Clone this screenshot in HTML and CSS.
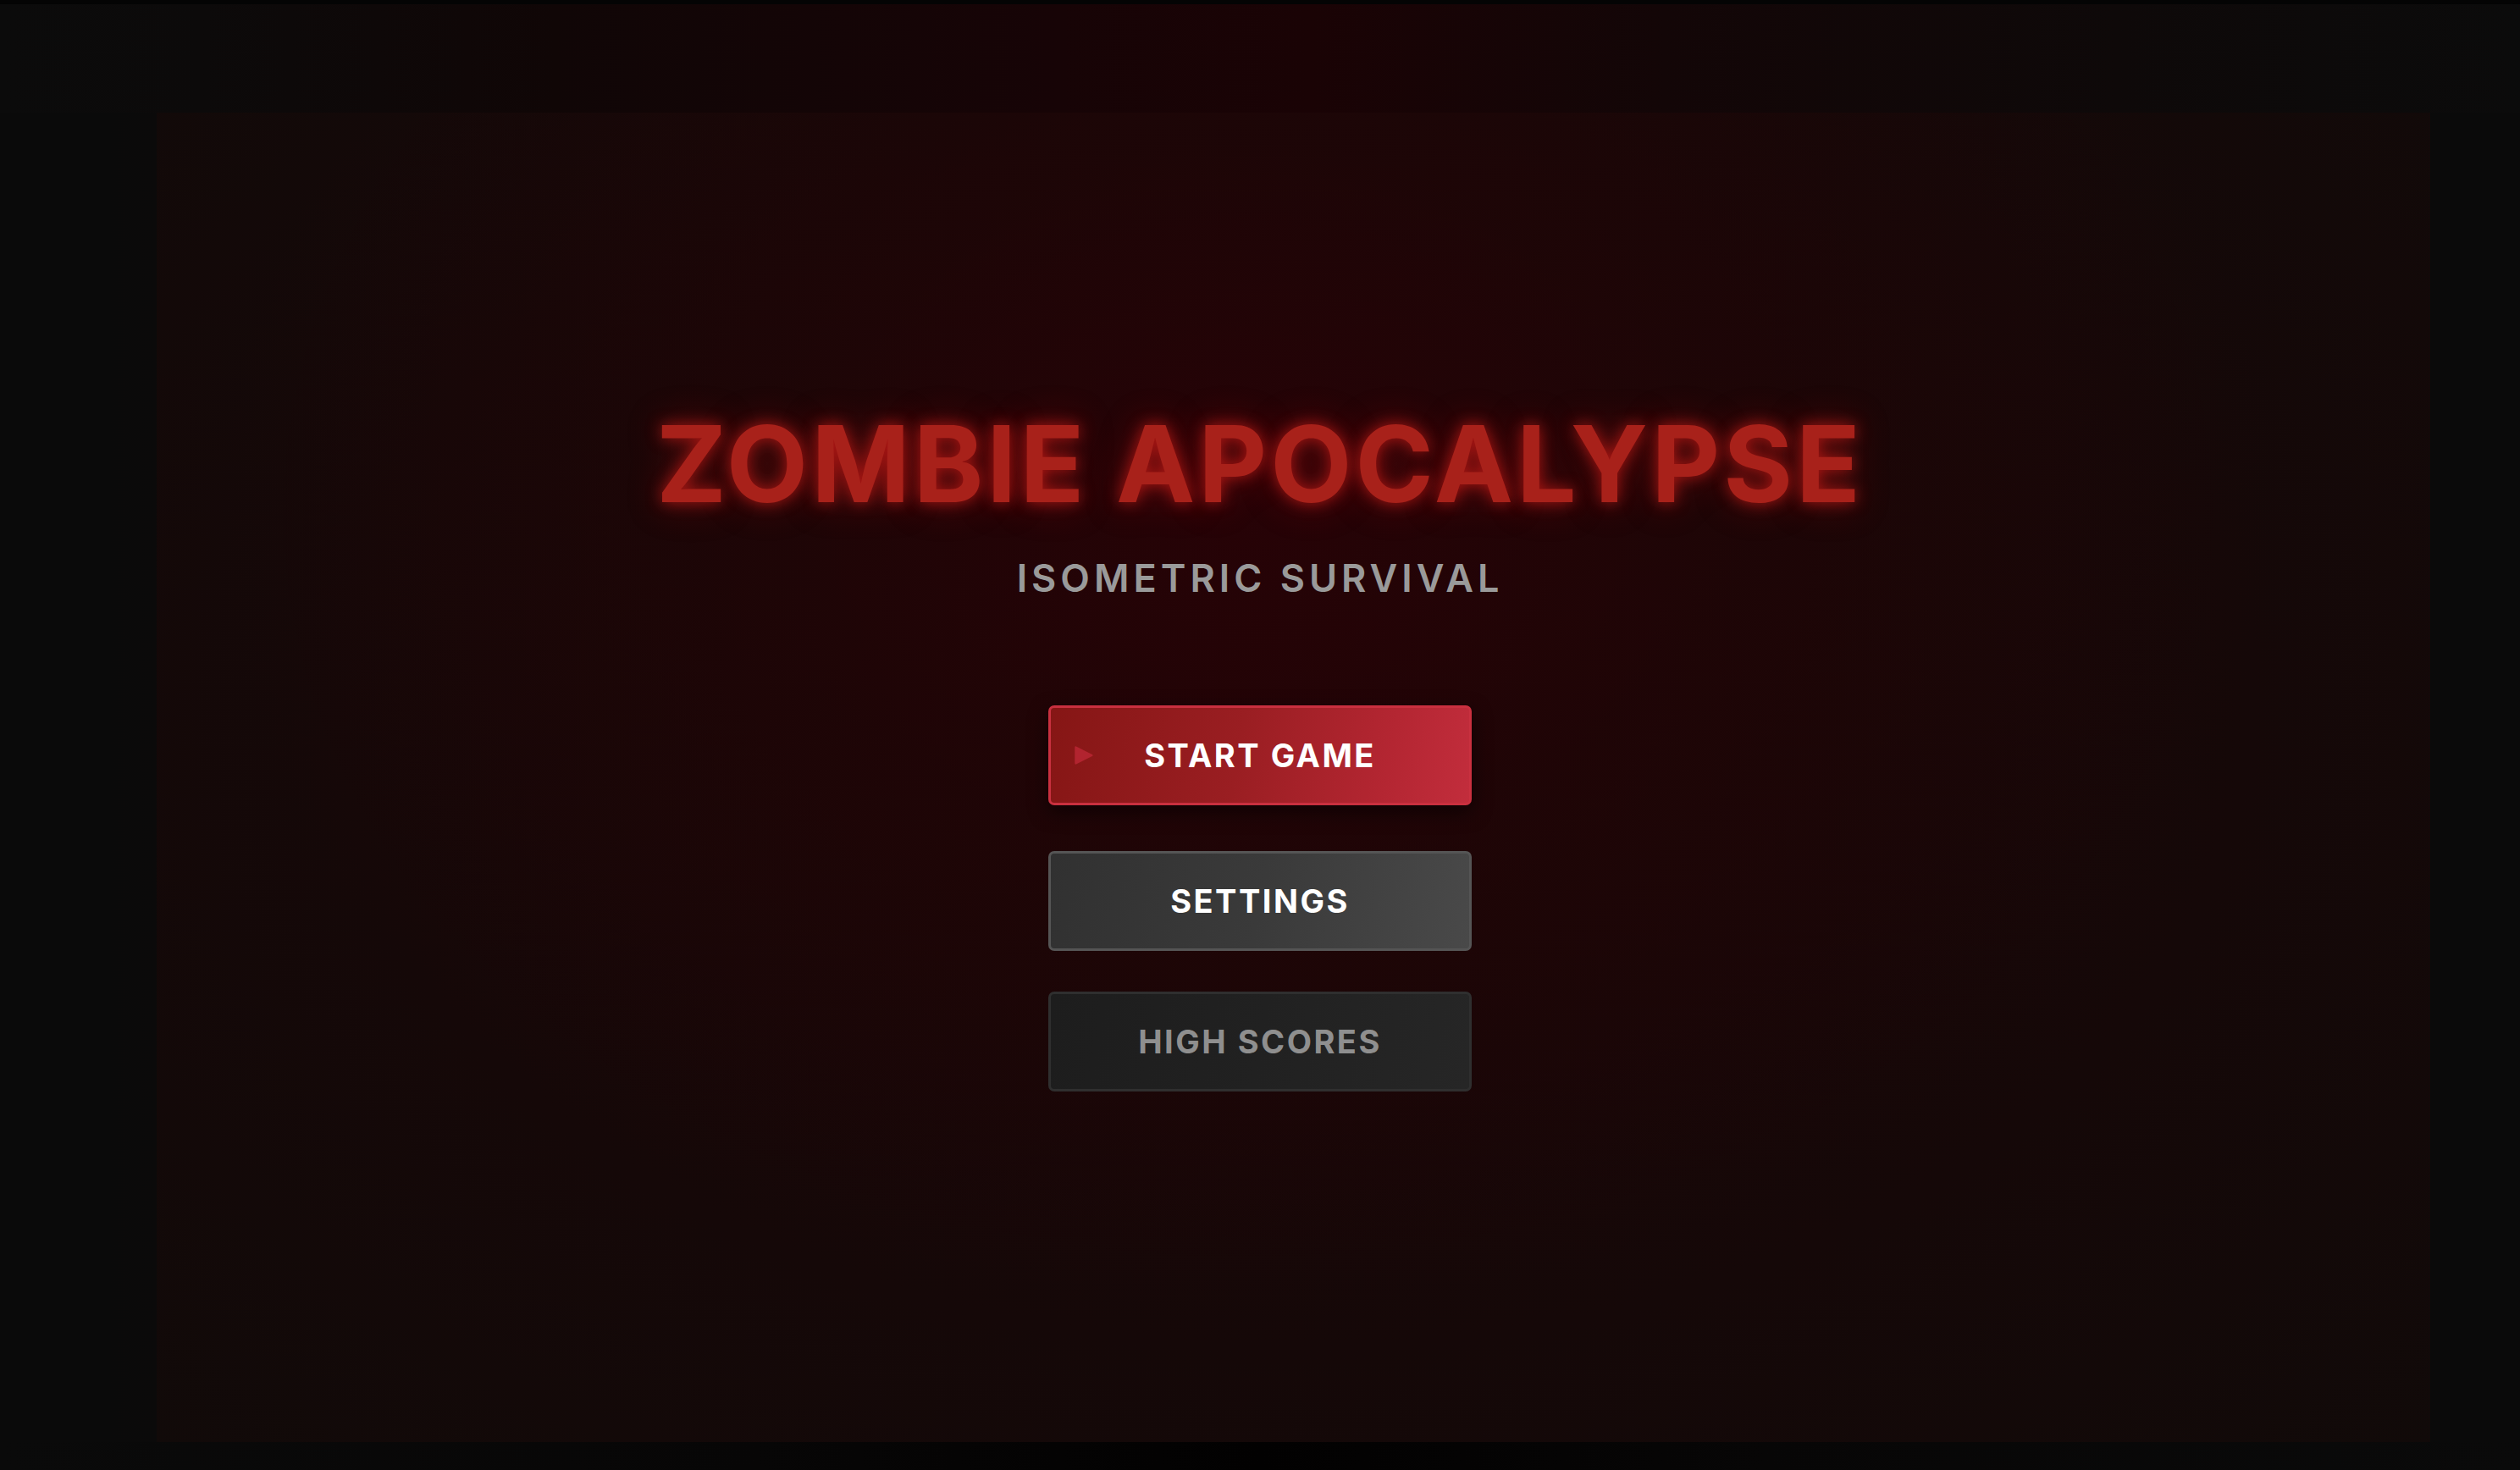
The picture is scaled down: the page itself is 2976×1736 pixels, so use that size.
FILE: index.html
```html
<!DOCTYPE html>
<html lang="en">
<head>
<meta charset="utf-8">
<title>Zombie Apocalypse</title>
<link rel="stylesheet" href="styles.css">
</head>
<body>
<div class="screen">
  <div class="topbar"></div>
  <div class="topstrip"></div>
  <div class="middle">
    <div class="side side-left"></div>
    <main class="panel">
      <h1 class="title">ZOMBIE APOCALYPSE</h1>
      <p class="subtitle">ISOMETRIC SURVIVAL</p>
      <nav class="menu">
        <button class="btn btn-start">
          <svg class="play" viewBox="0 0 24 24" width="26" height="26"><path d="M3 3.5 Q3 1.5 5 2.5 L22 11 Q23.5 12 22 13 L5 21.5 Q3 22.5 3 20.5 Z" fill="#b2242f"/></svg>
          <span>START GAME</span>
        </button>
        <button class="btn btn-settings"><span>SETTINGS</span></button>
        <button class="btn btn-scores"><span>HIGH SCORES</span></button>
      </nav>
    </main>
    <div class="side side-right"></div>
  </div>
  <div class="bottomstrip"></div>
</div>
</body>
</html>
```

FILE: styles.css
```css
html, body {
  margin: 0;
  padding: 0;
  background: #0a0a0a;
  height: 100%;
  overflow: hidden;
}

.screen {
  display: grid;
  grid-template-rows: 5px 128px 1fr 33px;
  height: 100vh;
  width: 100vw;
}

.topbar {
  background: #040404;
}

.topstrip {
  background: linear-gradient(90deg, #0b0b0b 0%, #0c0a0a 8%, #100606 22%, #170406 42%, #1a0305 52%, #130607 66%, #0e0909 84%, #0b0b0b 100%);
}

.middle {
  display: grid;
  grid-template-columns: 185px 1fr 106px;
}

.side {
  background: #0a0a0a;
}

.side-left {
  background: linear-gradient(90deg, #0a0a0a 0%, #0a0a0a 70%, #0b0a0a 100%);
}

.bottomstrip {
  background: linear-gradient(90deg, #0a0a0a 0%, #070606 30%, #020101 50%, #070606 70%, #0a0a0a 100%);
}

.panel {
  background:
    radial-gradient(ellipse 45% 60% at 48% 30%, rgba(40, 2, 6, 0.9) 0%, rgba(34, 4, 6, 0.6) 45%, rgba(26, 6, 6, 0) 100%),
    radial-gradient(ellipse 70% 80% at 50% 45%, #1c0607 0%, #150808 60%, #110a09 100%);
  display: flex;
  flex-direction: column;
  align-items: center;
  padding: 352px 79px 0 0;
  font-family: Inter, "Noto Sans", "Liberation Sans", sans-serif;
}

.title {
  margin: 0;
  font-size: 125px;
  line-height: 1;
  font-weight: 700;
  letter-spacing: 4px;
  color: #a8211a;
  text-shadow: 0 0 18px rgba(220, 30, 25, 0.7), 0 0 44px rgba(200, 20, 20, 0.4);
}

.subtitle {
  margin: 50px 0 0;
  font-size: 45px;
  line-height: 1;
  font-weight: 600;
  letter-spacing: 5px;
  color: #9a9a9a;
}

.menu {
  margin-top: 128px;
  display: flex;
  flex-direction: column;
}

.btn {
  position: relative;
  width: 500px;
  height: 118px;
  box-sizing: border-box;
  border-radius: 7px;
  border: 3px solid;
  display: flex;
  align-items: center;
  justify-content: center;
  font-family: Inter, "Noto Sans", "Liberation Sans", sans-serif;
  font-size: 38px;
  font-weight: 700;
  letter-spacing: 2.5px;
  padding: 0;
  cursor: pointer;
}

.btn-start {
  background: linear-gradient(100deg, #861615 0%, #9a1e22 45%, #b42632 80%, #c22d3c 100%);
  border-color: #c9303f;
  color: #ffffff;
  box-shadow: 0 8px 22px rgba(0, 0, 0, 0.55);
}

.play {
  position: absolute;
  left: 25px;
  top: 50%;
  transform: translateY(-50%);
}

.btn-settings {
  margin-top: 54px;
  background: linear-gradient(100deg, #313131 0%, #3a3a3a 50%, #494949 100%);
  border-color: #555555;
  color: #ffffff;
}

.btn-scores {
  margin-top: 48px;
  background: linear-gradient(100deg, #1d1d1d 0%, #212121 50%, #262626 100%);
  border-color: #2f2f2f;
  color: #8f8f8f;
}
```
